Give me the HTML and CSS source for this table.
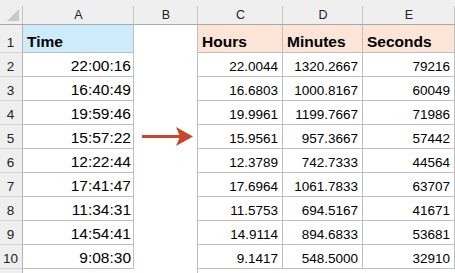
FILE: index.html
```html
<!DOCTYPE html>
<html lang="en">
<head>
  <meta charset="UTF-8">
  <title>Time to Hours, Minutes, Seconds</title>
  <link rel="stylesheet" href="styles.css">
</head>
<body>
  <div class="sheet">
    <div class="corner"></div>
    <div class="col-head">A</div>
    <div class="col-head">B</div>
    <div class="col-head">C</div>
    <div class="col-head">D</div>
    <div class="col-head">E</div>

    <div class="row-num">1</div>
    <div class="cell title title--blue">Time</div>
    <div class="cell gap"></div>
    <div class="cell title title--peach">Hours</div>
    <div class="cell title title--peach">Minutes</div>
    <div class="cell title title--peach">Seconds</div>

    <div class="row-num">2</div>
    <div class="cell time">22:00:16</div>
    <div class="cell gap"></div>
    <div class="cell num">22.0044</div>
    <div class="cell num">1320.2667</div>
    <div class="cell num">79216</div>

    <div class="row-num">3</div>
    <div class="cell time">16:40:49</div>
    <div class="cell gap"></div>
    <div class="cell num">16.6803</div>
    <div class="cell num">1000.8167</div>
    <div class="cell num">60049</div>

    <div class="row-num">4</div>
    <div class="cell time">19:59:46</div>
    <div class="cell gap"></div>
    <div class="cell num">19.9961</div>
    <div class="cell num">1199.7667</div>
    <div class="cell num">71986</div>

    <div class="row-num">5</div>
    <div class="cell time">15:57:22</div>
    <div class="cell gap"></div>
    <div class="cell num">15.9561</div>
    <div class="cell num">957.3667</div>
    <div class="cell num">57442</div>

    <div class="row-num">6</div>
    <div class="cell time">12:22:44</div>
    <div class="cell gap"></div>
    <div class="cell num">12.3789</div>
    <div class="cell num">742.7333</div>
    <div class="cell num">44564</div>

    <div class="row-num">7</div>
    <div class="cell time">17:41:47</div>
    <div class="cell gap"></div>
    <div class="cell num">17.6964</div>
    <div class="cell num">1061.7833</div>
    <div class="cell num">63707</div>

    <div class="row-num">8</div>
    <div class="cell time">11:34:31</div>
    <div class="cell gap"></div>
    <div class="cell num">11.5753</div>
    <div class="cell num">694.5167</div>
    <div class="cell num">41671</div>

    <div class="row-num">9</div>
    <div class="cell time">14:54:41</div>
    <div class="cell gap"></div>
    <div class="cell num">14.9114</div>
    <div class="cell num">894.6833</div>
    <div class="cell num">53681</div>

    <div class="row-num">10</div>
    <div class="cell time">9:08:30</div>
    <div class="cell gap"></div>
    <div class="cell num">9.1417</div>
    <div class="cell num">548.5000</div>
    <div class="cell num">32910</div>

    <div class="row-num row-num--last"></div>
    <div class="cell blank"></div>
    <div class="cell gap"></div>
    <div class="cell blank"></div>
    <div class="cell blank"></div>
    <div class="cell blank"></div>

    <!-- arrow drawn over column B -->
    <svg class="arrow" width="52" height="21" viewBox="0 0 52 21">
      <rect x="0" y="9" width="40" height="3" fill="#c8472b"/>
      <path d="M51 10.5 L34 1 L38 10.5 L34 20 Z" fill="#c8472b"/>
    </svg>
  </div>
</body>
</html>
```

FILE: styles.css
```css
html {
  box-sizing: border-box;
}

*, *:before, *:after {
  box-sizing: inherit;
}

body {
  margin: 0;
  background: #fff;
  font-family: "Liberation Sans", Arial, sans-serif;
  color: #000;
  overflow: hidden;
}

.sheet {
  position: relative;
  display: grid;
  grid-template-columns: 23px 111px 64px 85px 80px 92px;
  grid-template-rows: 25px 28px repeat(9, 24px) 4px;
  width: 455px;
}

.corner,
.col-head {
  background: linear-gradient(#c6c6c6, #c6c6c6) right bottom / 1px 18px no-repeat, #efefef;
  border-bottom: 1px solid #a9a9a9;
}

.corner {
  display: flex;
  align-items: flex-end;
  padding: 0 0 3px 7px;
}

.corner:before {
  content: '';
  width: 12px;
  height: 12px;
  background: #c9c9c9;
  clip-path: polygon(100% 0, 100% 100%, 0 100%);
}

.col-head {
  display: flex;
  justify-content: center;
  align-items: flex-end;
  padding-bottom: 2px;
  font-size: 12.5px;
  color: #222;
}

.row-num {
  display: flex;
  justify-content: center;
  align-items: flex-end;
  padding: 0 1px 2px 0;
  font-size: 13.5px;
  color: #222;
  background: #efefef;
  border-right: 1px solid #b4b4b4;
  border-bottom: 1px solid #d2d2d2;
}

.row-num--last {
  border-bottom: 0;
}

.cell {
  display: flex;
  align-items: flex-end;
  border-right: 1px solid #bfbfbf;
  border-bottom: 1px solid #bfbfbf;
  white-space: nowrap;
}

.title {
  padding: 0 0 1px 4px;
  font-size: 15.5px;
  font-weight: bold;
}

.title--blue {
  background: #ccebfb;
}

.title--peach {
  background: #fce4d6;
}

.time {
  justify-content: flex-end;
  padding: 0 2px 1px 0;
  font-size: 15.5px;
}

.num {
  justify-content: flex-end;
  padding: 0 4px 2px 0;
  font-size: 13.5px;
}

.gap {
  border-bottom: 0;
}

.blank {
  border-right: 0;
  border-bottom: 0;
}

.arrow {
  position: absolute;
  left: 142px;
  top: 126px;
}
```
